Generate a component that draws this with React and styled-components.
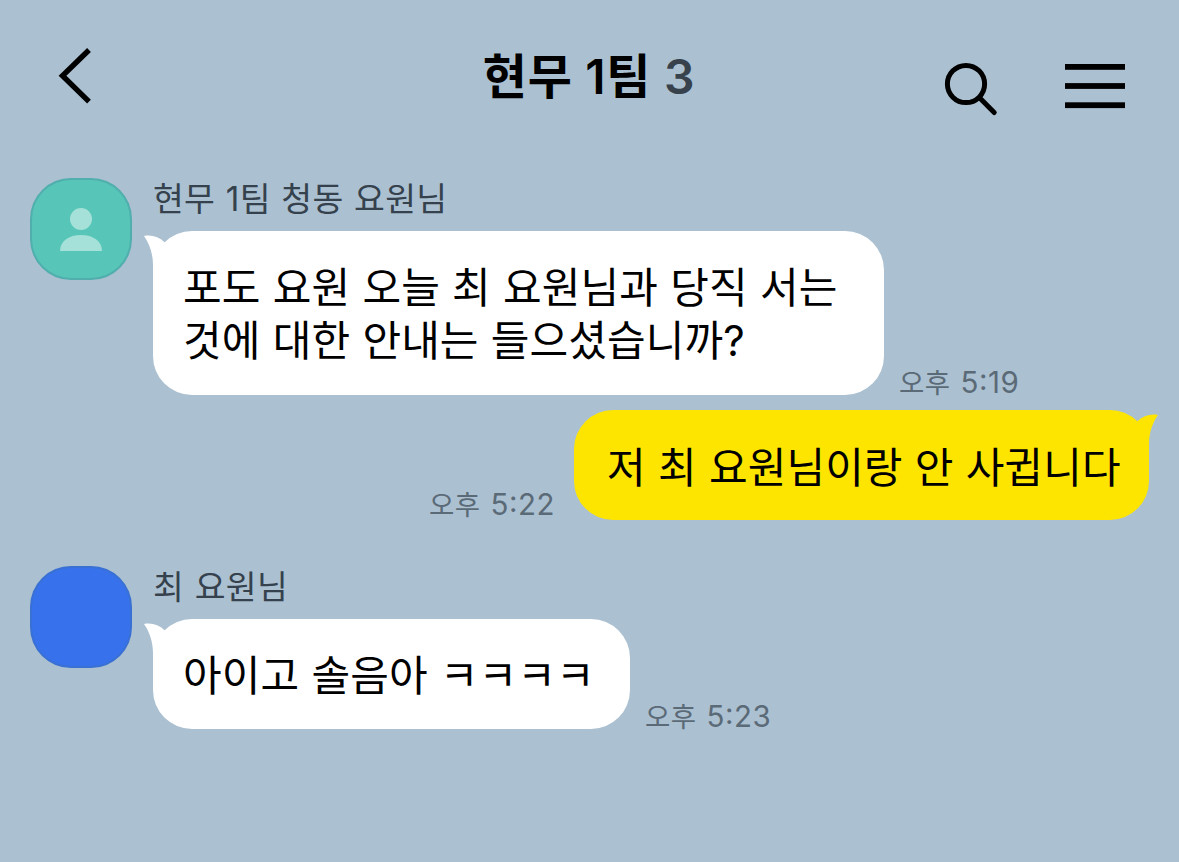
import * as React from "react"
import styled, { createGlobalStyle } from "styled-components";

const GlobalStyle = createGlobalStyle`
  * {
    box-sizing: border-box;
  }
  body {
    margin: 0;
    background-color: #ABC0D1;
    font-family: Inter, "Noto Sans CJK KR", sans-serif;
  }
`;

const Screen = styled.div`
  width: 1179px;
  height: 862px;
  overflow: hidden;
  background-color: #ABC0D1;
`

const Header = styled.header`
  display: grid;
  grid-template-columns: 1fr auto 1fr;
  align-items: start;
  height: 178px;
  padding: 46px 52px 0 56px;
`

const IconButton = styled.button`
  display: flex;
  padding: 0;
  border: 0;
  background: none;
  cursor: pointer;
`

const Title = styled.h1`
  margin: 0;
  padding: 1px 5px 0 0;
  font-size: 48px;
  font-weight: 600;
  line-height: 60px;
  letter-spacing: 0.7px;
  color: #000;
  white-space: nowrap;
`

const Count = styled.span`
  color: #37424D;
`

const Actions = styled.div`
  display: flex;
  justify-content: flex-end;
  gap: 65px;
  padding-top: 15px;
`

const Row = styled.section`
  display: flex;
  justify-content: ${({ $mine }) => ($mine ? "flex-end" : "flex-start")};
  padding: 0 30px;
  margin-top: ${({ $space }) => $space || 0}px;
`

const Avatar = styled.div`
  display: flex;
  flex: none;
  align-items: flex-end;
  justify-content: center;
  width: 102px;
  height: 102px;
  margin-right: 21px;
  padding-bottom: 27px;
  border: 2px solid rgba(60, 110, 140, 0.25);
  border-radius: 41px;
  background-color: ${({ $color }) => $color};
`

const Name = styled.div`
  height: 53px;
  padding-top: 1px;
  font-size: 33.5px;
  line-height: 40px;
  letter-spacing: 0.3px;
  word-spacing: 0.8px;
  color: #35414C;
  white-space: nowrap;
`

const Line = styled.div`
  display: flex;
  flex-direction: ${({ $mine }) => ($mine ? "row-reverse" : "row")};
  align-items: flex-end;
  gap: ${({ $mine }) => ($mine ? 19 : 15)}px;
`

const Bubble = styled.div`
  position: relative;
  width: ${({ $width }) => $width}px;
  padding: ${({ $mine }) => ($mine ? "31px 0 26px 33px" : "30px 0 27px 30px")};
  border-radius: 39px;
  background-color: ${({ $mine }) => ($mine ? "#FEE500" : "#FFF")};
  color: #000;
  font-size: 42px;
  line-height: 53.4px;
  letter-spacing: 0.1px;
  word-spacing: 0.3px;
  white-space: pre;
`

const TailSvg = styled.svg`
  position: absolute;
  top: 4px;
  ${({ $mine }) => ($mine ? "right: -9px; transform: scaleX(-1);" : "left: -9px;")}
`

const Time = styled.time`
  display: flex;
  align-items: baseline;
  gap: 10px;
  height: 29px;
  margin-bottom: ${({ $mine }) => ($mine ? 3 : 0)}px;
  font-size: 29.5px;
  line-height: 32px;
  letter-spacing: 0.5px;
  font-feature-settings: "case";
  color: #5B6A77;
  white-space: nowrap;
`

const Meridiem = styled.span`
  font-size: 27.5px;
`

const BackIcon = () => (
  <svg width="40" height="60" viewBox="0 0 40 60" fill="none" stroke="#000" strokeWidth="5.4">
    <path d="M33 4 L6.5 29.8 L33 55.6" />
  </svg>
)

const SearchIcon = () => (
  <svg width="56" height="56" viewBox="0 0 56 56" fill="none" stroke="#000" strokeWidth="5" strokeLinecap="round">
    <circle cx="22" cy="23" r="18.6" />
    <path d="M35.8 37 L50.2 51.5" />
  </svg>
)

const MenuIcon = () => (
  <svg width="62" height="50" viewBox="0 0 62 50" fill="#000">
    <rect x="0" y="3" width="60" height="5.8" />
    <rect x="0" y="22.1" width="60" height="5.8" />
    <rect x="0" y="41.3" width="60" height="5.8" />
  </svg>
)

const PersonIcon = () => (
  <svg width="42" height="44" viewBox="0 0 42 44" fill="#A5E1D8">
    <circle cx="21" cy="12" r="11" />
    <path d="M0 44 C0 34 9 28 21 28 C33 28 42 34 42 44 Z" />
  </svg>
)

const Tail = ({ mine }) => (
  <TailSvg $mine={mine} width="28" height="38" viewBox="0 0 28 38" fill={mine ? "#FEE500" : "#FFF"}>
    <path d="M0 0.9 C8 -0.4 15 1.8 20.6 7.2 L28 20 V38 H9 V30 C9 18 5 8 0 0.9 Z" />
  </TailSvg>
)

const Message = ({ text, time, width, mine }) => (
  <Line $mine={mine}>
    <Bubble $mine={mine} $width={width}>
      <Tail mine={mine} />
      {text}
    </Bubble>
    <Time $mine={mine}>
      <Meridiem>오후</Meridiem>
      {time}
    </Time>
  </Line>
)

const App = () => (
  <Screen>
    <GlobalStyle />
    <Header>
      <IconButton aria-label="뒤로">
        <BackIcon />
      </IconButton>
      <Title>
        현무 1팀 <Count>3</Count>
      </Title>
      <Actions>
        <IconButton aria-label="검색">
          <SearchIcon />
        </IconButton>
        <IconButton aria-label="메뉴">
          <MenuIcon />
        </IconButton>
      </Actions>
    </Header>
    <Row>
      <Avatar $color="#57C5B8">
        <PersonIcon />
      </Avatar>
      <div>
        <Name>현무 1팀 청동 요원님</Name>
        <Message
          width={731}
          text={"포도 요원 오늘 최 요원님과 당직 서는\n것에 대한 안내는 들으셨습니까?"}
          time="5:19"
        />
      </div>
    </Row>
    <Row $mine $space={15.2}>
      <Message mine width={575} text="저 최 요원님이랑 안 사귑니다" time="5:22" />
    </Row>
    <Row $space={45.6}>
      <Avatar $color="#3871EC" />
      <div>
        <Name>최 요원님</Name>
        <Message width={477} text="아이고 솔음아 ㅋㅋㅋㅋ" time="5:23" />
      </div>
    </Row>
  </Screen>
);


export default App
